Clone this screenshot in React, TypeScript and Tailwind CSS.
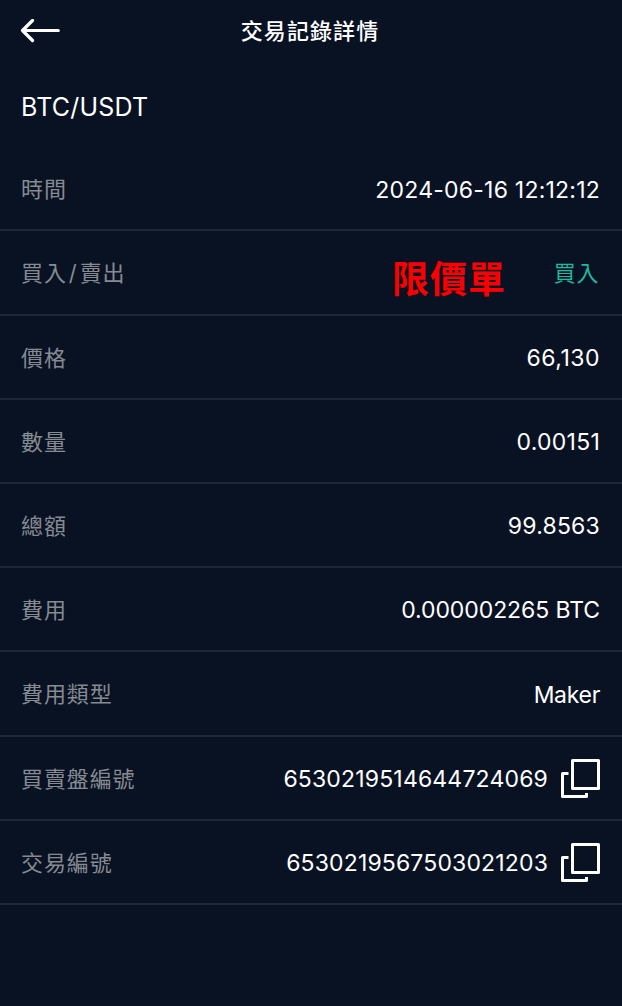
import React from "react";

interface IDetailRow {
  label: React.ReactNode;
  value: string;
  valueClass: string;
  note?: string;
  copyable?: boolean;
}

const rows: IDetailRow[] = [
  { label: "時間", value: "2024-06-16 12:12:12", valueClass: "text-[23px] text-white tracking-[0.22px]" },
  {
    label: (
      <>
        買入<span className="mr-[2px] ml-[2px]">/</span>賣出
      </>
    ),
    value: "買入",
    valueClass: "text-[22px] text-[#1fb9a0] tracking-[0.6px] pr-px",
    note: "限價單",
  },
  { label: "價格", value: "66,130", valueClass: "text-[23px] text-white tracking-[0.5px]" },
  { label: "數量", value: "0.00151", valueClass: "text-[23px] text-white tracking-[0.25px]" },
  { label: "總額", value: "99.8563", valueClass: "text-[23px] text-white tracking-[0.2px]" },
  { label: "費用", value: "0.000002265 BTC", valueClass: "text-[23px] text-white tracking-[-0.08px]" },
  { label: "費用類型", value: "Maker", valueClass: "text-[23px] text-white tracking-[-0.3px]" },
  { label: "買賣盤編號", value: "6530219514644724069", valueClass: "text-[23px] text-white tracking-[0.17px]", copyable: true },
  { label: "交易編號", value: "6530219567503021203", valueClass: "text-[23px] text-white tracking-[0.15px]", copyable: true },
];

const BackIcon = () => (
  <svg width="40" height="24" viewBox="0 0 40 24" fill="none" stroke="white" strokeWidth="3.2" strokeLinecap="round" strokeLinejoin="round">
    <path d="M38.3 11.5H2.5M12.5 1.5L2.5 11.5L12.5 21.5" />
  </svg>
);

const CopyIcon = () => (
  <svg width="39" height="40" viewBox="0 0 39 40" fill="none" stroke="white" strokeWidth="3" strokeLinejoin="round">
    <rect x="11.5" y="1.5" width="26" height="28" />
    <path d="M7.5 14.5H1.5V37.5H25.5V34" />
  </svg>
);

const DetailRow = ({ label, value, valueClass, note, copyable }: IDetailRow) => {
  return (
    <div className="flex h-[84.2px] items-center justify-between border-b-2 border-[#1e2736] pt-[3px] pr-[22px] pl-[21px]">
      <span className="text-[22px] tracking-[0.9px] text-[#868a92]">{label}</span>
      <div className="flex items-center">
        {note && <span className="mt-3 mr-[48px] text-[37px] leading-none font-bold tracking-[0.9px] text-[#fa0000]">{note}</span>}
        <span className={valueClass}>{value}</span>
        {copyable && (
          <button className="ml-[13px]">
            <CopyIcon />
          </button>
        )}
      </div>
    </div>
  );
};

const App = () => {
  return (
    <div className="h-[1006px] w-[622px] overflow-hidden bg-[#091223] font-['Inter','Noto_Sans_CJK_TC',sans-serif]">
      <header className="grid h-[62px] grid-cols-[1fr_auto_1fr] items-center px-[20px]">
        <button>
          <BackIcon />
        </button>
        <h1 className="-ml-[2px] text-[22px] font-medium tracking-[1.1px] text-white">交易記錄詳情</h1>
      </header>
      <h2 className="flex h-[85.2px] items-center px-[21px] pt-[6px] text-[25px] tracking-[0.2px] text-white">BTC/USDT</h2>
      <div>
        {rows.map((row) => (
          <DetailRow key={row.value} {...row} />
        ))}
      </div>
    </div>
  );
};

export default App;
